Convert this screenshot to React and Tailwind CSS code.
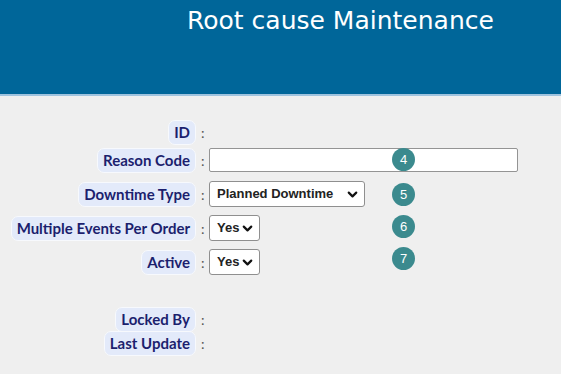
import React from "react";
import { ChevronDown } from "lucide-react";

const Label = ({ children }) => (
  <div className="flex items-center justify-end">
    <span className="rounded-[7px] border border-[#f7f9fd] bg-[#e3eafa] px-[5px] py-[2px] text-[15px] font-bold leading-[19px] text-[#1c1f6e] [font-family:Lato,sans-serif]">
      {children}
    </span>
    <span className="ml-[5px] w-[8px] text-[14px] text-[#555] [font-family:Lato,sans-serif]">:</span>
  </div>
);

const Badge = ({ n, className }) => (
  <div
    className={`absolute flex h-[23px] w-[23px] items-center justify-center rounded-full bg-[#3b8a8e] text-[13px] text-white [font-family:'Liberation_Sans',sans-serif] ${className}`}
  >
    {n}
  </div>
);

const Select = ({ value, width }) => (
  <div
    className={`flex h-[26px] items-center justify-between rounded-[3px] border border-[#8f8f8f] bg-white pl-[7px] pr-[4px] text-[13px] font-bold text-[#222] [font-family:'Liberation_Sans',sans-serif] ${width}`}
  >
    <span>{value}</span>
    <ChevronDown size={15} strokeWidth={3.5} className="text-[#111]" />
  </div>
);

const Row = ({ label, children, className }) => (
  <div className={`relative flex items-center ${className}`}>
    <div className="w-[209px] shrink-0">
      <Label>{label}</Label>
    </div>
    {children}
  </div>
);

export default function App() {
  return (
    <div className="h-[374px] w-[561px] overflow-hidden bg-[#efefef]">
      <div className="h-[96px] border-b-2 border-[#9fc3de] bg-[#006699] pl-[187px] pt-[4px]">
        <h1 className="text-[25px] leading-[34px] text-white [font-family:'DejaVu_Sans',sans-serif]">
          Root cause Maintenance
        </h1>
      </div>

      <div className="pt-[24px]">
        <Row label="ID" className="h-[24px]" />
        <Row label="Reason Code" className="mt-[4px] h-[24px]">
          <div className="h-[24px] w-[309px] rounded-[2px] border border-[#949494] bg-white" />
          <Badge n="4" className="left-[392px] top-[0px]" />
        </Row>
        <Row label="Downtime Type" className="mt-[9px] h-[26px]">
          <Select value="Planned Downtime" width="w-[156px]" />
          <Badge n="5" className="left-[392px] top-[2px]" />
        </Row>
        <Row label="Multiple Events Per Order" className="mt-[8px] h-[26px]">
          <Select value="Yes" width="w-[51px]" />
          <Badge n="6" className="left-[392px] top-[0px]" />
        </Row>
        <Row label="Active" className="mt-[8px] h-[26px]">
          <Select value="Yes" width="w-[51px]" />
          <Badge n="7" className="left-[392px] top-[-2px]" />
        </Row>
        <Row label="Locked By" className="mt-[32px] h-[24px]" />
        <Row label="Last Update" className="h-[24px]" />
      </div>
    </div>
  );
}
